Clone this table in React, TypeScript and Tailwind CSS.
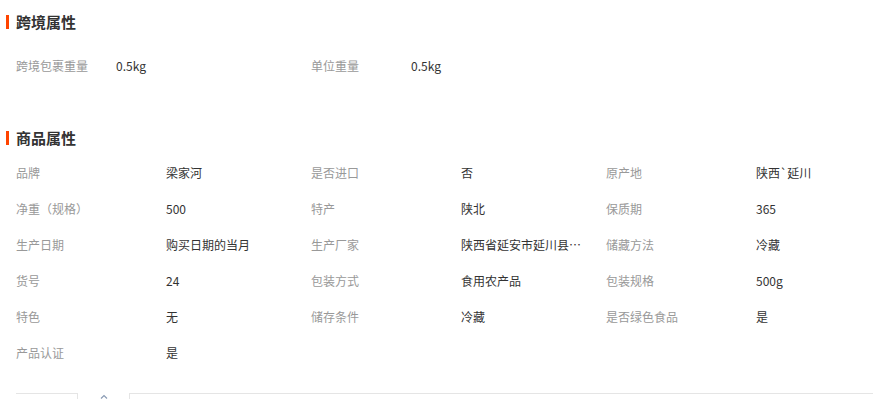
const crossBorder = [
  { label: "跨境包裹重量", value: "0.5kg" },
  { label: "单位重量", value: "0.5kg" },
];

const goodsAttrs = [
  { label: "品牌", value: "梁家河" },
  { label: "是否进口", value: "否" },
  { label: "原产地", value: "陕西`延川" },
  { label: "净重（规格）", value: "500" },
  { label: "特产", value: "陕北" },
  { label: "保质期", value: "365" },
  { label: "生产日期", value: "购买日期的当月" },
  { label: "生产厂家", value: "陕西省延安市延川县梁家河村" },
  { label: "储藏方法", value: "冷藏" },
  { label: "货号", value: "24" },
  { label: "包装方式", value: "食用农产品" },
  { label: "包装规格", value: "500g" },
  { label: "特色", value: "无" },
  { label: "储存条件", value: "冷藏" },
  { label: "是否绿色食品", value: "是" },
  { label: "产品认证", value: "是" },
];

const SectionTitle = ({ title }: { title: string }) => (
  <div className="flex items-center h-5">
    <span className="w-[3px] h-[14px] bg-[#ff4400] ml-[6px] mr-[7px]" />
    <h3 className="text-[15px] font-bold text-[#333] leading-5">{title}</h3>
  </div>
);

export default function App() {
  return (
    <div
      className="w-[874px] h-[399px] overflow-hidden bg-white text-[12px]"
      style={{ fontFamily: '"Noto Sans CJK SC", "Noto Sans", sans-serif' }}
    >
      {/* 跨境属性 */}
      <div className="pt-3">
        <SectionTitle title="跨境属性" />
        <div className="grid grid-cols-[295px_295px] mt-4 pl-4">
          {crossBorder.map((item) => (
            <div key={item.label} className="flex items-center h-9">
              <span className="w-[100px] text-[#999]">{item.label}</span>
              <span className="text-[#333]">{item.value}</span>
            </div>
          ))}
        </div>
      </div>

      {/* 商品属性 */}
      <div className="mt-11">
        <SectionTitle title="商品属性" />
        <div className="grid grid-cols-[295px_295px_284px] mt-[7px] pl-4">
          {goodsAttrs.map((item) => (
            <div key={item.label} className="flex items-center h-9">
              <span className="w-[150px] shrink-0 text-[#999]">{item.label}</span>
              <span className="w-[124px] truncate text-[#333]">{item.value}</span>
            </div>
          ))}
        </div>
      </div>

      {/* tab bar */}
      <div className="flex mt-[22px] ml-4 mr-[1px] h-3">
        <div className="w-[62px] border-t border-r border-[#e5e5e5]" />
        <div className="w-[51px] flex justify-center pt-[1px]">
          <svg width="8" height="5" viewBox="0 0 8 5" fill="none" stroke="#8a9bb4" strokeWidth="1.2">
            <path d="M1 4.5L4 1.5L7 4.5" />
          </svg>
        </div>
        <div className="flex-1 border-t border-l border-[#e5e5e5]" />
      </div>
    </div>
  );
}
